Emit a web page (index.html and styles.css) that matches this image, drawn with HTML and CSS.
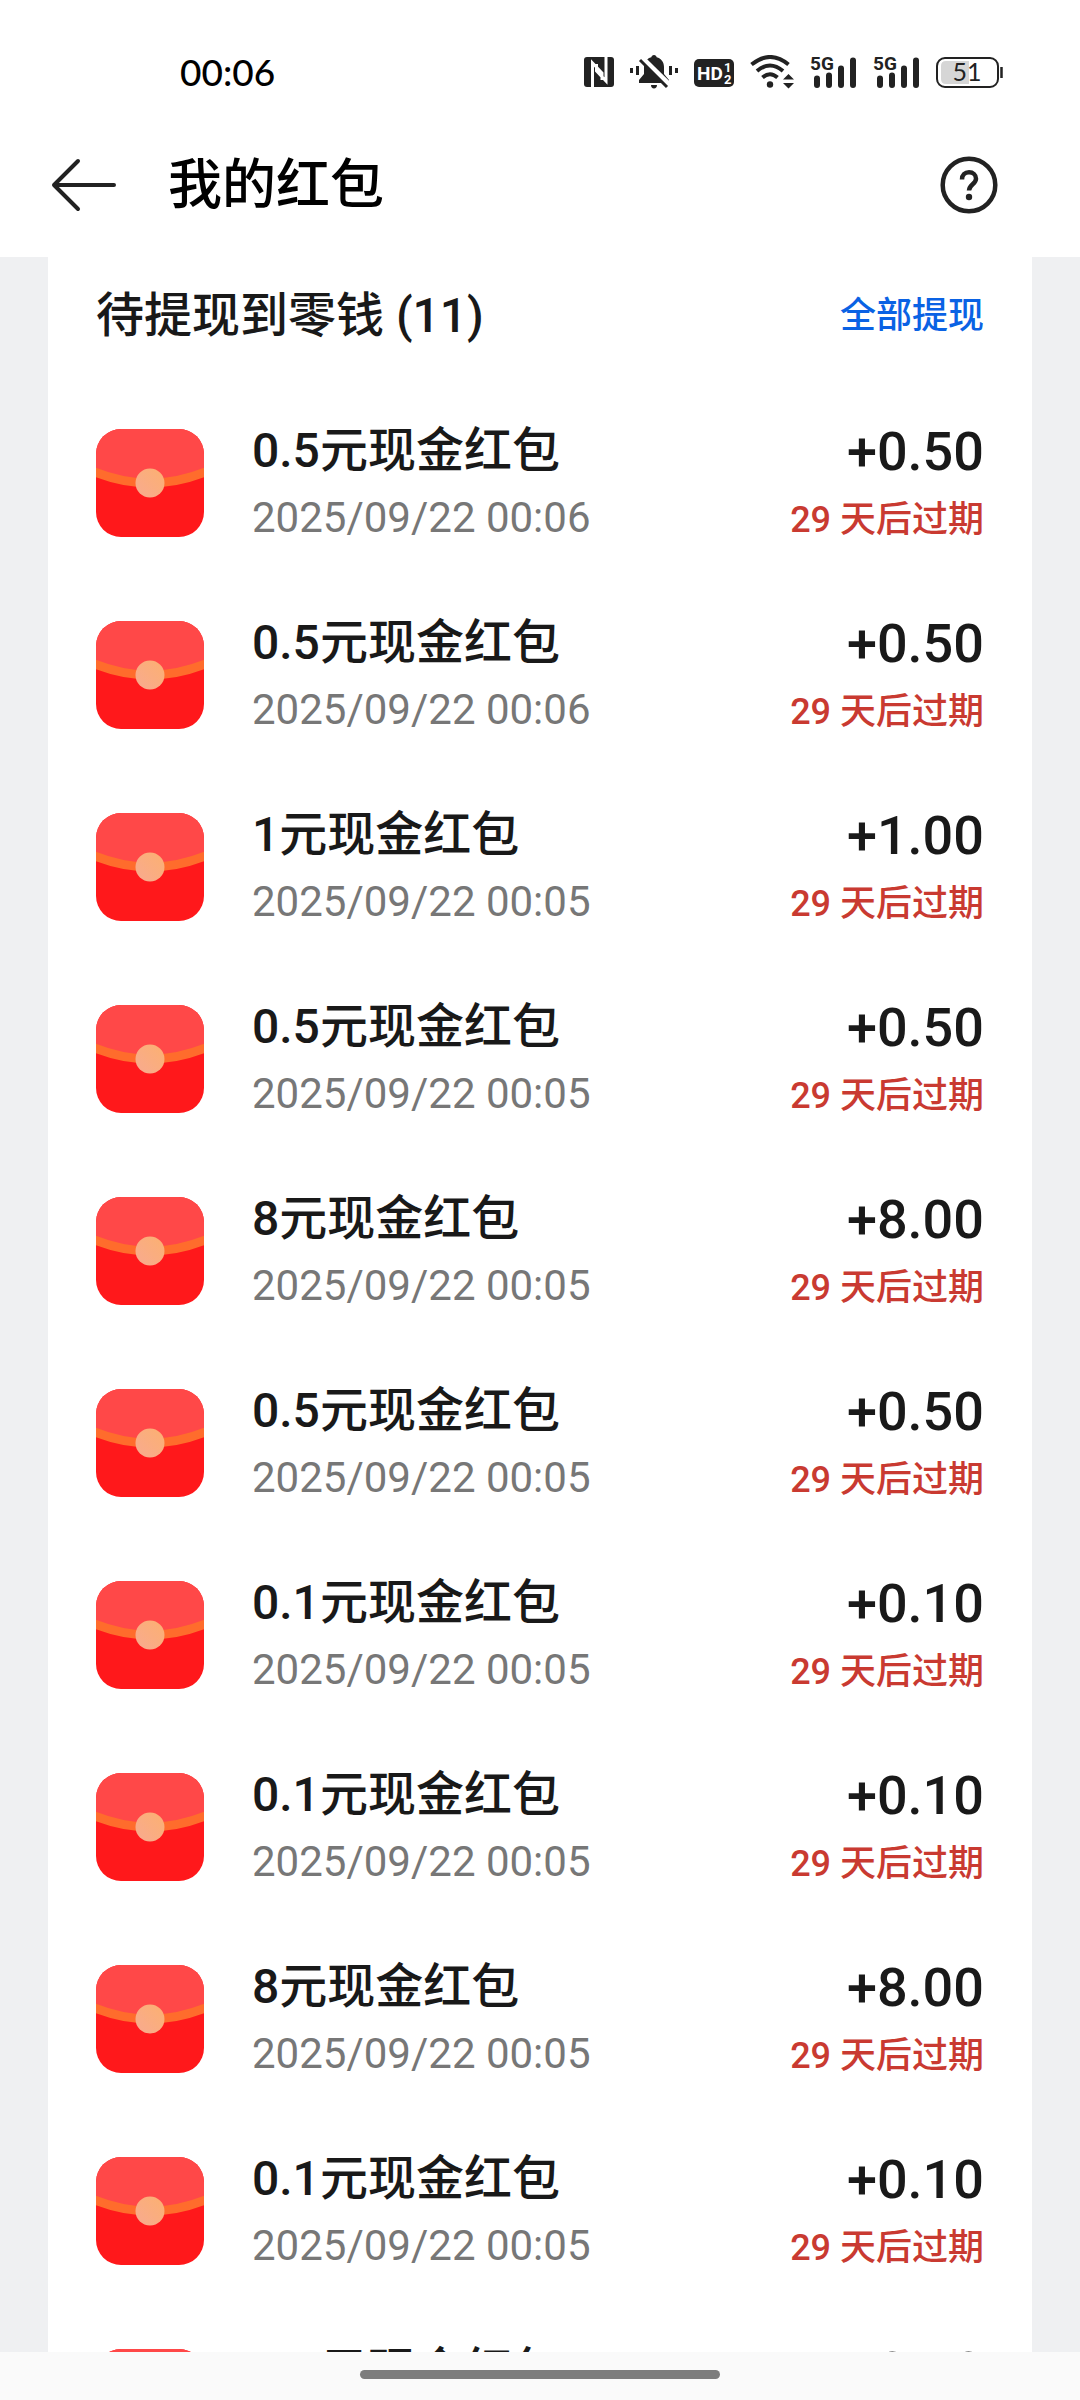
FILE: index.html
```html
<!DOCTYPE html>
<html lang="zh-CN">
<head>
<meta charset="utf-8">
<meta name="viewport" content="width=device-width, initial-scale=1">
<title>我的红包</title>
<link rel="stylesheet" href="styles.css">
</head>
<body>
<svg class="defs" aria-hidden="true">
  <defs>
    <linearGradient id="seal" x1="1" y1="0" x2="0" y2="1">
      <stop offset="0" stop-color="#fcb070"/>
      <stop offset="1" stop-color="#f8aa90"/>
    </linearGradient>
    <clipPath id="tile"><rect width="108" height="108" rx="25"/></clipPath>
    <symbol id="packet" viewBox="0 0 108 108">
      <g clip-path="url(#tile)">
        <rect width="108" height="108" fill="#ff181b"/>
        <path d="M0 0H108V43Q54 65 0 43Z" fill="#ff4848"/>
        <path d="M-6 41Q54 67 114 41" fill="none" stroke="#ff6c2c" stroke-width="9"/>
        <circle cx="54" cy="54" r="14.500" fill="url(#seal)"/>
      </g>
    </symbol>
    <symbol id="signal" viewBox="0 0 47 34">
      <text x="0" y="15" class="glyph-5g">5G</text>
      <path d="M7 23.500V30M19 20.500V30M31 13.500V30M43 5.500V30" fill="none" stroke="#222" stroke-width="6" stroke-linecap="round"/>
    </symbol>
  </defs>
</svg>

<div class="status">
  <time class="clock">00:06</time>
  <div class="status-icons" aria-hidden="true">
    <svg width="30" height="34" viewBox="0 0 30 34">
      <rect y="2" width="30" height="30" rx="3" fill="#222"/>
      <path d="M8.500 32V8L18 18V25M22 2V26L12.500 16V9" fill="none" stroke="#fff" stroke-width="3"/>
    </svg>
    <svg width="48" height="34" viewBox="0 0 48 34" fill="#222">
      <path d="M0 13h3v5H0zM6 11h3v9H6zM39 11h3v9h-3zM45 13h3v5h-3z"/>
      <path d="M24 0c1.500 0 2.500 1 2.700 2.300C31 3.500 34 7 34 12v7l5 6v3H9v-3l5-6v-7c0-5 3-8.500 7.300-9.700C21.500 1 22.500 0 24 0zM21 30h6c0 2-1.200 3.500-3 3.500S21 32 21 30z"/>
      <path d="M12 3.500L40 31" stroke="#fff" stroke-width="6"/>
      <path d="M10 5L37 32" stroke="#222" stroke-width="3"/>
    </svg>
    <svg width="40" height="34" viewBox="0 0 40 34">
      <rect y="4" width="40" height="28" rx="5" fill="#222"/>
      <text x="3" y="25" class="glyph-hd">HD</text>
      <text x="30" y="17" class="glyph-sim">1</text>
      <text x="30" y="29" class="glyph-sim">2</text>
    </svg>
    <svg width="44" height="34" viewBox="0 0 44 34">
      <g fill="none" stroke="#222" stroke-width="4">
        <path d="M1.500 9.500Q20 -5.500 38.500 9.500M7 16Q20 5 33 16M12.500 22.500Q20 16 27.500 22.500"/>
      </g>
      <circle cx="20" cy="29.500" r="3.200" fill="#222"/>
      <path d="M33 24.500l5.500-5.500 5.500 5.500zM33 28l5.500 5.500 5.500-5.500z" fill="#222"/>
    </svg>
    <svg width="47" height="34"><use href="#signal"/></svg>
    <svg width="47" height="34"><use href="#signal"/></svg>
    <svg width="67" height="34" viewBox="0 0 67 34">
      <rect x="1" y="3" width="61" height="29" rx="8" fill="#fff" stroke="#222" stroke-width="2"/>
      <path d="M10 6H33V29H10Q5 29 5 24V11Q5 6 10 6Z" fill="#d6d6d6"/>
      <path d="M65.500 12V23" stroke="#222" stroke-width="2.500"/>
      <text x="31" y="26" text-anchor="middle" class="glyph-battery">51</text>
    </svg>
  </div>
</div>

<header class="topbar">
  <button class="icon-button" type="button" aria-label="返回">
    <svg width="66" height="54" viewBox="0 0 66 54" fill="none" stroke="#222" stroke-width="4" stroke-linecap="round" stroke-linejoin="round">
      <path d="M28 3L4 27L28 51M4 27H64"/>
    </svg>
  </button>
  <h1 class="page-title">我的红包</h1>
  <button class="icon-button" type="button" aria-label="帮助">
    <svg width="58" height="58" viewBox="0 0 58 58" fill="none" stroke="#222">
      <circle cx="29" cy="29" r="26.300" stroke-width="4.500"/>
      <path d="M22 23.500C22 19 25 16.300 29 16.300S36 19 36 22.700C36 28 29 28.500 29 34.500" stroke-width="4.500"/>
      <circle cx="29" cy="41" r="3.200" fill="#222" stroke="none"/>
    </svg>
  </button>
</header>

<main class="content">
  <section class="card">
    <div class="card-head">
      <h2 class="card-title">待提现到零钱 (11)</h2>
      <a class="withdraw" href="#">全部提现</a>
    </div>
    <ul class="list">
      <li class="row"><svg class="packet"><use href="#packet"/></svg><div class="info"><span class="name">0.5元现金红包</span><time class="date">2025/09/22 00:06</time></div><div class="value"><span class="amount">+0.50</span><span class="expiry">29 天后过期</span></div></li>
      <li class="row"><svg class="packet"><use href="#packet"/></svg><div class="info"><span class="name">0.5元现金红包</span><time class="date">2025/09/22 00:06</time></div><div class="value"><span class="amount">+0.50</span><span class="expiry">29 天后过期</span></div></li>
      <li class="row"><svg class="packet"><use href="#packet"/></svg><div class="info"><span class="name">1元现金红包</span><time class="date">2025/09/22 00:05</time></div><div class="value"><span class="amount">+1.00</span><span class="expiry">29 天后过期</span></div></li>
      <li class="row"><svg class="packet"><use href="#packet"/></svg><div class="info"><span class="name">0.5元现金红包</span><time class="date">2025/09/22 00:05</time></div><div class="value"><span class="amount">+0.50</span><span class="expiry">29 天后过期</span></div></li>
      <li class="row"><svg class="packet"><use href="#packet"/></svg><div class="info"><span class="name">8元现金红包</span><time class="date">2025/09/22 00:05</time></div><div class="value"><span class="amount">+8.00</span><span class="expiry">29 天后过期</span></div></li>
      <li class="row"><svg class="packet"><use href="#packet"/></svg><div class="info"><span class="name">0.5元现金红包</span><time class="date">2025/09/22 00:05</time></div><div class="value"><span class="amount">+0.50</span><span class="expiry">29 天后过期</span></div></li>
      <li class="row"><svg class="packet"><use href="#packet"/></svg><div class="info"><span class="name">0.1元现金红包</span><time class="date">2025/09/22 00:05</time></div><div class="value"><span class="amount">+0.10</span><span class="expiry">29 天后过期</span></div></li>
      <li class="row"><svg class="packet"><use href="#packet"/></svg><div class="info"><span class="name">0.1元现金红包</span><time class="date">2025/09/22 00:05</time></div><div class="value"><span class="amount">+0.10</span><span class="expiry">29 天后过期</span></div></li>
      <li class="row"><svg class="packet"><use href="#packet"/></svg><div class="info"><span class="name">8元现金红包</span><time class="date">2025/09/22 00:05</time></div><div class="value"><span class="amount">+8.00</span><span class="expiry">29 天后过期</span></div></li>
      <li class="row"><svg class="packet"><use href="#packet"/></svg><div class="info"><span class="name">0.1元现金红包</span><time class="date">2025/09/22 00:05</time></div><div class="value"><span class="amount">+0.10</span><span class="expiry">29 天后过期</span></div></li>
      <li class="row"><svg class="packet"><use href="#packet"/></svg><div class="info"><span class="name">0.1元现金红包</span><time class="date">2025/09/22 00:05</time></div><div class="value"><span class="amount">+0.10</span><span class="expiry">29 天后过期</span></div></li>
    </ul>
  </section>
</main>

<div class="gesture-bar"><span class="gesture-pill"></span></div>
</body>
</html>
```
FILE: styles.css
```css
* {
  box-sizing: border-box;
}

body {
  margin: 0;
  height: 100vh;
  display: flex;
  flex-direction: column;
  background: #fff;
  color: #191919;
  font-family: Roboto, "Noto Sans CJK SC", sans-serif;
}

h1,
h2,
ul {
  margin: 0;
  padding: 0;
}

.defs {
  position: absolute;
  width: 0;
  height: 0;
}

/* System status bar */
.status {
  flex: none;
  display: flex;
  align-items: center;
  justify-content: space-between;
  height: 112px;
  padding: 32px 77px 0 180px;
}

.clock {
  font: 500 37px/40px Lato, sans-serif;
  color: #000;
}

.status-icons {
  display: flex;
  align-items: center;
  gap: 16px;
}

.glyph-5g {
  font: 700 19px Roboto, sans-serif;
  fill: #222;
}

.glyph-hd {
  font: 700 19px Roboto, sans-serif;
  fill: #fff;
}

.glyph-sim {
  font: 700 13px Roboto, sans-serif;
  fill: #fff;
}

.glyph-battery {
  font: 400 25px Lato, sans-serif;
  fill: #222;
}

/* Title bar */
.topbar {
  flex: none;
  display: flex;
  align-items: center;
  height: 145px;
  padding: 0 82px 0 50px;
}

.icon-button {
  display: flex;
  padding: 0;
  border: 0;
  background: none;
}

.page-title {
  flex: 1;
  margin-left: 52px;
  padding-top: 2px;
  font-size: 54px;
  line-height: 72px;
  font-weight: 500;
  color: #000;
}

/* Scrolling area */
.content {
  flex: 1;
  min-height: 0;
  overflow: hidden;
  padding: 0 48px;
  background: #eff0f2;
}

.card {
  padding: 0 48px;
  background: #fff;
}

.card-head {
  display: flex;
  align-items: center;
  justify-content: space-between;
  height: 130px;
  padding-bottom: 12px;
}

.card-title {
  font-size: 48px;
  line-height: 64px;
  font-weight: 500;
}

.withdraw {
  font-size: 36px;
  line-height: 48px;
  font-weight: 500;
  color: #0a62e4;
  text-decoration: none;
}

.list {
  list-style: none;
}

.row {
  display: flex;
  align-items: center;
  gap: 48px;
  height: 192px;
}

.packet {
  flex: none;
  width: 108px;
  height: 108px;
}

.info,
.value {
  display: flex;
  flex-direction: column;
}

.info {
  flex: 1;
}

.value {
  align-items: flex-end;
}

.name {
  font-size: 48px;
  line-height: 70px;
  font-weight: 500;
}

.date {
  font-size: 42px;
  line-height: 64px;
  color: #777;
}

.amount {
  font-size: 54px;
  line-height: 74px;
  font-weight: 500;
}

.expiry {
  font-size: 36px;
  line-height: 62px;
  font-weight: 500;
  color: #c93a31;
}

/* System gesture bar */
.gesture-bar {
  flex: none;
  display: flex;
  justify-content: center;
  height: 48px;
  padding-top: 18px;
  background: #fafafa;
}

.gesture-pill {
  width: 33.333%;
  height: 9px;
  border-radius: 5px;
  background: #7d7d7d;
}
```
